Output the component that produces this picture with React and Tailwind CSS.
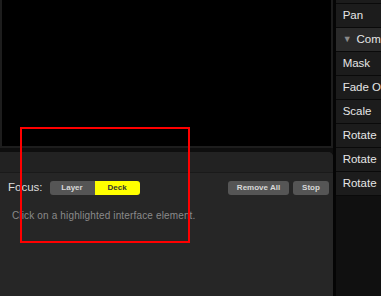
const rows = [
  { label: "", partial: true },
  { label: "Pan" },
  { label: "Com", group: true },
  { label: "Mask" },
  { label: "Fade O" },
  { label: "Scale" },
  { label: "Rotate" },
  { label: "Rotate" },
  { label: "Rotate" },
]

function App() {
  return (
    <div
      className="relative flex w-[381px] h-[296px] overflow-hidden bg-[#0e0e0e]"
      style={{ fontFamily: '"Liberation Sans", Arial, sans-serif' }}
    >
      {/* left column */}
      <div className="flex flex-col w-[334px]">
        <div className="h-[148px] bg-black border-x-2 border-b-2 border-[#1d1d1d]" />
        <div className="h-[4px]" />
        <div className="flex-1 flex flex-col w-[333px] bg-[#262626] rounded-tr-[5px]">
          <div className="h-[21px] bg-[#222222] border-b border-[#1a1a1a] rounded-tr-[5px]" />
          <div className="flex items-center h-[28px] pl-2 pr-1 mt-[1px]">
            <span className="text-[11.5px] text-[#dddddd] mr-[7px]">Focus:</span>
            <div className="flex h-[14px] rounded-[3px] overflow-hidden text-[8px] leading-none">
              <div className="w-[45px] flex items-center justify-center bg-[#555555] text-[#d8d8d8] font-bold">Layer</div>
              <div className="w-[45px] flex items-center justify-center bg-[#ffff00] text-[#333333] font-bold">Deck</div>
            </div>
            <div className="flex-1" />
            <button className="w-[61px] h-[14px] rounded-[3px] bg-[#555555] text-[8px] leading-none text-[#d8d8d8] font-bold">
              Remove All
            </button>
            <button className="w-[36px] h-[14px] ml-[4px] rounded-[3px] bg-[#555555] text-[8px] leading-none text-[#d8d8d8] font-bold">
              Stop
            </button>
          </div>
          <div className="pl-3 mt-[6px] text-[10px] tracking-[0.15px] text-[#8a8a8a]">
            Click on a highlighted interface element.
          </div>
        </div>
      </div>

      {/* right column */}
      <div className="w-[3px] bg-[#050505]" />
      <div className="flex-1 flex flex-col bg-[#101010]">
        {rows.map((r, i) => (
          <div
            key={i}
            className={
              (r.partial ? "h-[4px] " : "h-[24px] ") +
              (r.group ? "bg-[#2a2a2a] " : "bg-[#1c1c1c] ") +
              "flex items-center pl-[7px] border-b border-[#0a0a0a] text-[11.5px] text-[#e6e6e6] whitespace-nowrap overflow-hidden"
            }
          >
            {r.group && <span className="text-[9px] text-[#8a8a8a] mr-[5px]">▼</span>}
            {r.label}
          </div>
        ))}
      </div>

      {/* highlight overlay */}
      <div className="absolute left-[20px] top-[127px] w-[170px] h-[116px] border-2 border-[#ff0000]" />
    </div>
  )
}

export default App
